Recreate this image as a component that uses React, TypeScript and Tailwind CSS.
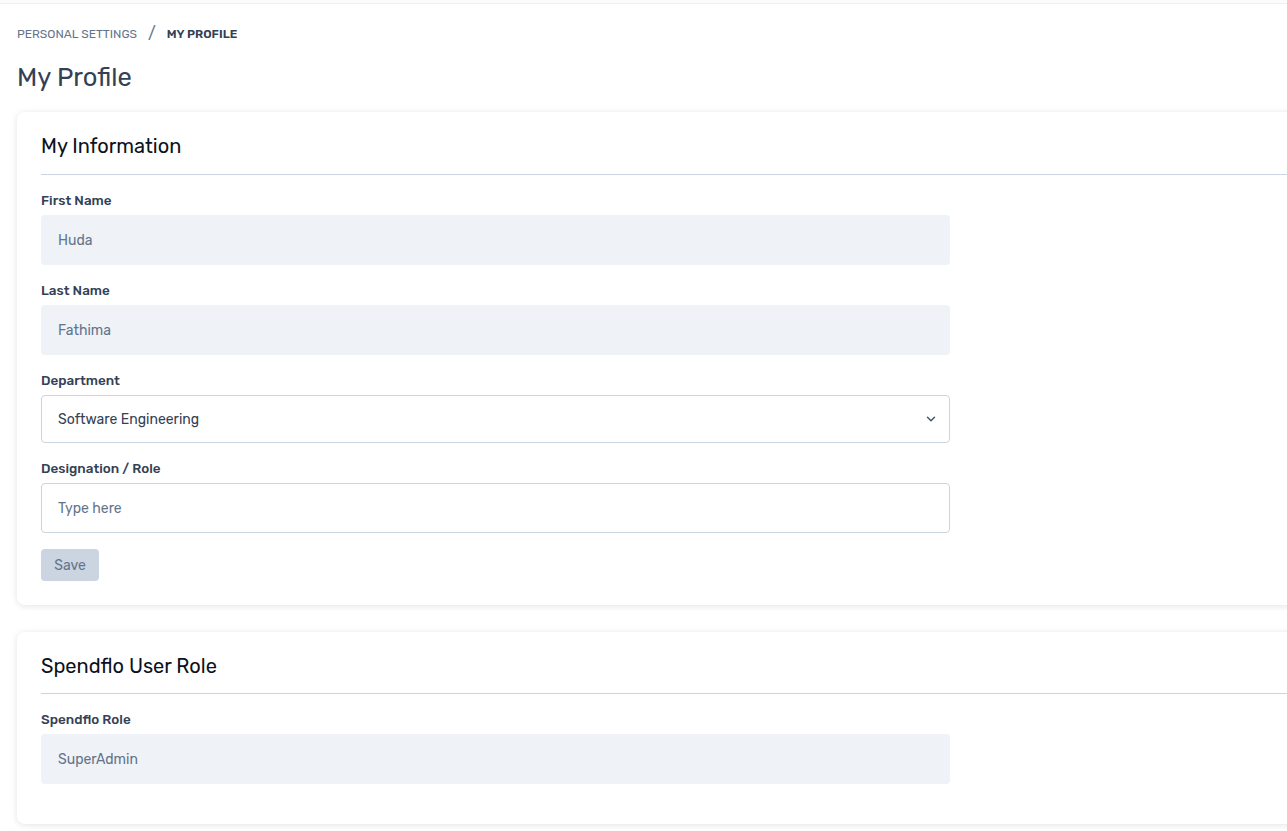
import { ChevronDown } from 'lucide-react'

const font = { fontFamily: "Rubik, Inter, 'Noto Sans', sans-serif" }

function FieldLabel({ children }: { children: string }) {
  return <label className="text-[13.5px] font-medium leading-[17px] text-[#334155]">{children}</label>
}

function ReadonlyField({ label, value }: { label: string; value: string }) {
  return (
    <div className="flex flex-col">
      <FieldLabel>{label}</FieldLabel>
      <div className="mt-[6px] flex h-[50px] w-[909px] items-center rounded-[4px] bg-[#eff2f7] px-[17px] text-[14px] text-[#64748b]">
        {value}
      </div>
    </div>
  )
}

export default function App() {
  return (
    <div style={font} className="h-[831px] w-[1287px] overflow-hidden bg-white">
      <div className="h-[4px] w-full border-b border-[#eef0f3] bg-[#fafbfc]" />
      <div className="pl-[17px]">
        <nav className="mt-[22px] flex items-center text-[12px] leading-[16px]">
          <span className="text-[#64748b]">PERSONAL SETTINGS</span>
          <span className="mx-[11px] text-[16px] text-[#64748b]">/</span>
          <span className="font-semibold text-[#334155]">MY PROFILE</span>
        </nav>
        <h1 className="mt-[19px] text-[25.5px] leading-[32px] text-[#334155]">My Profile</h1>

        <section className="mt-[19px] w-[1300px] rounded-[8px] bg-white px-[24px] pb-[24px] pt-[20px] shadow-[0_1px_6px_rgba(15,23,42,0.12)]">
          <h2 className="text-[20px] leading-[28px] text-[#0b1220]">My Information</h2>
          <div className="mt-[14px] h-px w-full bg-[#cbd5e1]" />
          <div className="mt-[17px] flex flex-col gap-[17px]">
            <ReadonlyField label="First Name" value="Huda" />
            <ReadonlyField label="Last Name" value="Fathima" />
            <div className="flex flex-col">
              <FieldLabel>Department</FieldLabel>
              <div className="mt-[6px] flex h-[48px] w-[909px] items-center justify-between rounded-[4px] border border-[#cbd5e1] px-[16px] text-[14px] text-[#334155]">
                <span>Software Engineering</span>
                <ChevronDown size={14} strokeWidth={2.5} className="mr-[-5px] text-[#475569]" />
              </div>
            </div>
            <div className="flex flex-col">
              <FieldLabel>Designation / Role</FieldLabel>
              <input
                placeholder="Type here"
                className="mt-[6px] h-[50px] w-[909px] rounded-[4px] border border-[#cbd5e1] px-[16px] text-[14px] text-[#334155] outline-none placeholder:text-[#64748b]"
              />
            </div>
          </div>
          <button
            type="button"
            className="mt-[16px] h-[32px] w-[58px] rounded-[4px] bg-[#cbd5e1] text-[14px] text-[#64748b]"
          >
            Save
          </button>
        </section>

        <section className="mt-[27px] w-[1300px] rounded-[8px] bg-white px-[24px] pb-[40px] pt-[20px] shadow-[0_1px_6px_rgba(15,23,42,0.12)]">
          <h2 className="text-[20px] leading-[28px] text-[#0b1220]">Spendflo User Role</h2>
          <div className="mt-[13px] h-px w-full bg-[#cbd5e1]" />
          <div className="mt-[17px]">
            <ReadonlyField label="Spendflo Role" value="SuperAdmin" />
          </div>
        </section>
      </div>
    </div>
  )
}
